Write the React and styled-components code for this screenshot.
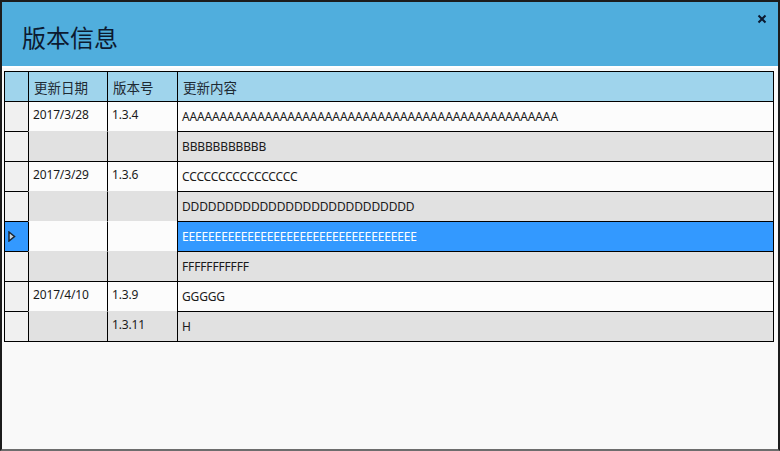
import React from 'react';
import styled, { createGlobalStyle } from 'styled-components';

const GlobalStyle = createGlobalStyle`
  html, body {
    margin: 0;
    padding: 0;
    background: #f9f9f9;
  }
  * {
    box-sizing: border-box;
  }
`;

const Window = styled.div`
  width: 780px;
  height: 451px;
  border: 2px solid #1c1c1c;
  border-bottom-color: #6d6d6d;
  background: #f9f9f9;
  font-family: "Noto Sans", "Noto Sans CJK SC", sans-serif;
  color: #1e1e1e;
  display: flex;
  flex-direction: column;
`;

const Header = styled.div`
  height: 66px;
  background: #50aedd;
  border-bottom: 2px solid #ffffff;
  display: flex;
  justify-content: space-between;
  align-items: flex-start;
  flex-shrink: 0;
`;

const Title = styled.h1`
  margin: 0;
  padding: 19px 0 0 20px;
  font-family: "Noto Sans CJK SC", sans-serif;
  font-size: 24px;
  font-weight: 400;
  line-height: 32px;
  color: #0c1a30;
`;

const CloseButton = styled.button`
  border: none;
  background: none;
  padding: 0;
  margin: 12px 11px 0 0;
  width: 10px;
  height: 10px;
  display: flex;
  cursor: pointer;
`;

const Body = styled.div`
  flex: 1;
  padding: 3px 5px 0 2px;
`;

const Grid = styled.div`
  width: 770px;
  border: 1px solid #000;
  display: grid;
  grid-template-columns: 23px 79px 70px 1fr;
  grid-template-rows: 29px repeat(8, 30px);
  font-size: 12px;
`;

const HeadCell = styled.div`
  background: #9fd4ec;
  border-left: ${p => (p.first ? 'none' : '1px solid #000')};
  padding-left: 5px;
  display: flex;
  align-items: center;
  font-family: "Noto Sans CJK SC", sans-serif;
  font-size: 13.5px;
  color: #1e2a33;
`;

const RowHead = styled.div`
  background: ${p => (p.selected ? '#3399ff' : '#f0f0f0')};
  border-top: 1px solid #000;
  display: flex;
  align-items: center;
  padding-left: 3px;
`;

const Cell = styled.div`
  background: ${p => (p.selected ? '#3399ff' : p.alt ? '#e1e1e1' : '#fcfcfc')};
  color: ${p => (p.selected ? '#ffffff' : '#1a1a1a')};
  border-top: 1px solid ${p => (p.line ? '#000' : 'transparent')};
  border-left: 1px solid #000;
  padding: ${p => (p.top ? '5px 0 0 4px' : '0 0 0 4px')};
  display: flex;
  align-items: ${p => (p.top ? 'flex-start' : 'center')};
  white-space: nowrap;
  overflow: hidden;
  line-height: 16px;
  letter-spacing: -0.15px;
`;

const Arrow = () => (
  <svg width="8" height="11" viewBox="0 0 8 11">
    <path d="M1 1 L6.5 5.5 L1 10 Z" fill="#c9d3dc" stroke="#1b2530" strokeWidth="1.5" strokeLinejoin="miter" />
  </svg>
);

const rows = [
  { date: '2017/3/28', ver: '1.3.4', text: 'A'.repeat(50), group: true },
  { text: 'B'.repeat(11) },
  { date: '2017/3/29', ver: '1.3.6', text: 'C'.repeat(16), group: true },
  { text: 'D'.repeat(27) },
  { text: 'E'.repeat(36), selected: true },
  { text: 'F'.repeat(11) },
  { date: '2017/4/10', ver: '1.3.9', text: 'G'.repeat(5), group: true },
  { ver: '1.3.11', text: 'H' },
];

export default function App() {
  return (
    <>
      <GlobalStyle />
      <Window>
        <Header>
          <Title>版本信息</Title>
          <CloseButton aria-label="close">
            <svg width="10" height="10" viewBox="0 0 10 10">
              <path d="M1.5 1.5 L8.5 8.5 M8.5 1.5 L1.5 8.5" stroke="#0c1a30" strokeWidth="2" />
            </svg>
          </CloseButton>
        </Header>
        <Body>
          <Grid>
            <HeadCell first />
            <HeadCell>更新日期</HeadCell>
            <HeadCell>版本号</HeadCell>
            <HeadCell>更新内容</HeadCell>
            {rows.map((r, i) => {
              const alt = i % 2 === 1;
              return (
                <React.Fragment key={i}>
                  <RowHead selected={r.selected}>{r.selected && <Arrow />}</RowHead>
                  <Cell alt={alt} line={r.group} top>{r.date}</Cell>
                  <Cell alt={alt} line={r.group} top>{r.ver}</Cell>
                  <Cell alt={alt} line selected={r.selected}>{r.text}</Cell>
                </React.Fragment>
              );
            })}
          </Grid>
        </Body>
      </Window>
    </>
  );
}
